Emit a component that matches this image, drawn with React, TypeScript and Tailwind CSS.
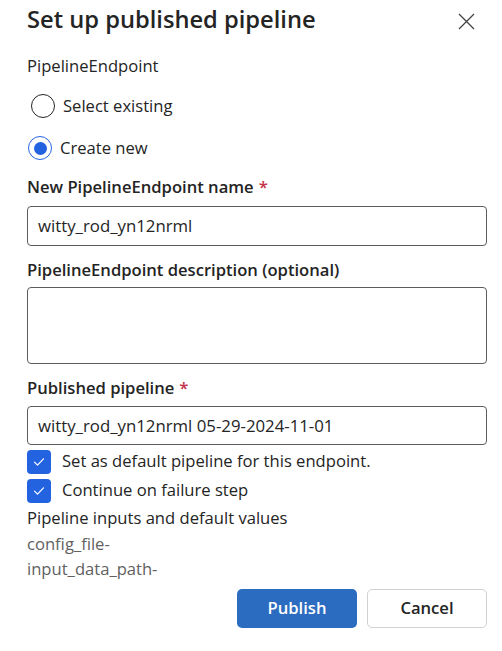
import React, { useState } from 'react';

const font = { fontFamily: '"Segoe UI", "Open Sans", "Noto Sans", sans-serif' };

const Check: React.FC<{ label: string }> = ({ label }) => (
  <div className="flex h-[25px] items-center">
    <span className="flex h-[24px] w-[24px] items-center justify-center rounded-[4px] bg-[#2463e0]">
      <svg width="14" height="14" viewBox="0 0 14 14" fill="none">
        <path d="M2.5 7.2l3 3 6-6.4" stroke="#fff" strokeWidth="1.2" strokeLinecap="round" strokeLinejoin="round" />
      </svg>
    </span>
    <span className="ml-[11px] text-[16.6px] text-[#242424]">{label}</span>
  </div>
);

const App: React.FC = () => {
  const [mode, setMode] = useState<'existing' | 'new'>('new');

  return (
    <div className="h-[651px] w-[502px] overflow-hidden bg-white pl-[27px] pr-[15px] text-[#242424]" style={font}>
      {/* Header */}
      <div className="flex h-[40px] items-center justify-between">
        <h1 className="text-[23.7px] font-semibold leading-none">Set up published pipeline</h1>
        <button className="mr-[12px] mt-[2px] text-[#424242]" aria-label="Close">
          <svg width="17" height="17" viewBox="0 0 17 17">
            <path d="M1 1l15 15M16 1L1 16" stroke="currentColor" strokeWidth="1.3" />
          </svg>
        </button>
      </div>

      <div className="mt-[14px] flex h-[24px] items-center text-[16.6px]">PipelineEndpoint</div>

      {/* Radio group */}
      <div className="mt-[16px] flex h-[24px] items-center pl-[4px]" onClick={() => setMode('existing')}>
        <span className={`flex h-[24px] w-[24px] items-center justify-center rounded-full border ${mode === 'existing' ? 'border-[#2463e0]' : 'border-[#242424]'}`}>
          {mode === 'existing' && <span className="h-[13px] w-[13px] rounded-full bg-[#2463e0]" />}
        </span>
        <span className="ml-[8px] text-[16.6px]">Select existing</span>
      </div>
      <div className="mt-[18px] flex h-[24px] items-center pl-[1px]" onClick={() => setMode('new')}>
        <span className={`flex h-[24px] w-[24px] items-center justify-center rounded-full border ${mode === 'new' ? 'border-[#2463e0]' : 'border-[#242424]'}`}>
          {mode === 'new' && <span className="h-[13px] w-[13px] rounded-full bg-[#2463e0]" />}
        </span>
        <span className="ml-[8px] text-[16.6px]">Create new</span>
      </div>

      {/* Name */}
      <div className="mt-[15px] flex h-[24px] items-center text-[16.6px] font-semibold">
        New PipelineEndpoint name<span className="ml-[5px] text-[#c4314b]">*</span>
      </div>
      <div className="mt-[7px] flex h-[40px] items-center rounded-[4px] border border-[#5c5c5c] px-[10px] text-[16.8px]">
        witty_rod_yn12nrml
      </div>

      {/* Description */}
      <div className="mt-[12px] flex h-[24px] items-center text-[16.6px] font-semibold">
        PipelineEndpoint description (optional)
      </div>
      <div className="mt-[5px] h-[77px] rounded-[4px] border border-[#5c5c5c]" />

      {/* Published pipeline */}
      <div className="mt-[12px] flex h-[24px] items-center text-[16.6px] font-semibold">
        Published pipeline<span className="ml-[5px] text-[#c4314b]">*</span>
      </div>
      <div className="mt-[6px] flex h-[39px] items-center rounded-[4px] border border-[#5c5c5c] px-[10px] text-[16.8px]">
        witty_rod_yn12nrml 05-29-2024-11-01
      </div>

      <div className="mt-[4px] flex flex-col gap-[4px]">
        <Check label="Set as default pipeline for this endpoint." />
        <Check label="Continue on failure step" />
      </div>

      <div className="mt-[2px] text-[16.6px] leading-[25.5px]">
        <div className="text-[#242424]">Pipeline inputs and default values</div>
        <div className="text-[#616161]">config_file-</div>
        <div className="text-[#616161]">input_data_path-</div>
      </div>

      {/* Footer */}
      <div className="mt-[7px] flex justify-end gap-[10px]">
        <button className="h-[39px] w-[120px] rounded-[5px] bg-[#2c6cc0] text-[16.6px] font-semibold text-white">Publish</button>
        <button className="h-[39px] w-[120px] rounded-[5px] border border-[#d1d1d1] bg-white text-[16.6px] font-semibold text-[#242424]">Cancel</button>
      </div>
    </div>
  );
};

export default App;
